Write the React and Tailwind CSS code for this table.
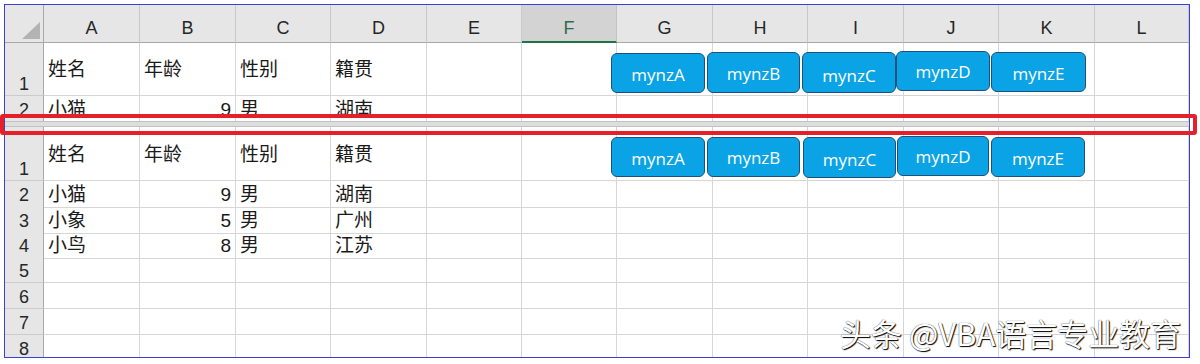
import React from "react";

const GRID =
  "grid grid-cols-[39px_96px_96px_95px_96px_95px_95px_96px_95px_96px_95px_96px_1fr]";
const COLS = ["A", "B", "C", "D", "E", "F", "G", "H", "I", "J", "K", "L"];

const topRows = [
  { h: "h-[53px]", label: "1", tall: true, cells: ["姓名", "年龄", "性别", "籍贯"] },
  { h: "h-[25px]", label: "2", cells: ["小猫", "9", "男", "湖南"], noBottom: true },
];

const bottomRows = [
  { h: "h-[54px]", label: "1", tall: true, cells: ["姓名", "年龄", "性别", "籍贯"] },
  { h: "h-[26px]", label: "2", cells: ["小猫", "9", "男", "湖南"] },
  { h: "h-[25px]", label: "3", cells: ["小象", "5", "男", "广州"] },
  { h: "h-[26px]", label: "4", cells: ["小鸟", "8", "男", "江苏"] },
  { h: "h-[25px]", label: "5", cells: [] },
  { h: "h-[26px]", label: "6", cells: [] },
  { h: "h-[26px]", label: "7", cells: [] },
  { h: "h-[26px]", label: "8", cells: [] },
];

const topButtons = [
  { n: "mynzA", x: 611, y: 53, w: 94, h: 40, t: 0 },
  { n: "mynzB", x: 707, y: 52, w: 93, h: 41, t: -1 },
  { n: "mynzC", x: 802, y: 52, w: 94, h: 41, t: 1 },
  { n: "mynzD", x: 896, y: 51, w: 94, h: 40, t: -1 },
  { n: "mynzE", x: 991, y: 52, w: 95, h: 40, t: 0 },
];
const bottomButtons = [
  { n: "mynzA", x: 611, y: 137, w: 94, h: 40, t: 0 },
  { n: "mynzB", x: 707, y: 137, w: 93, h: 40, t: -1 },
  { n: "mynzC", x: 803, y: 137, w: 93, h: 41, t: 0 },
  { n: "mynzD", x: 897, y: 136, w: 92, h: 40, t: -1 },
  { n: "mynzE", x: 991, y: 137, w: 94, h: 40, t: 0 },
];

function HeaderRow() {
  return (
    <div className={`${GRID} h-[38px] shrink-0`}>
      <div className="bg-[#e6e6e6] border-r border-b border-[#a8a8a8] flex items-end justify-end pr-[3px] pb-[3px]">
        <svg width="18" height="17" viewBox="0 0 18 17">
          <polygon points="18,0 18,17 0,17" fill="#b3b3b3" />
        </svg>
      </div>
      {COLS.map((c) =>
        c === "F" ? (
          <div
            key={c}
            className="bg-[#d3d3d3] border-r border-[#c4c4c4] border-b-2 border-b-[#217346] flex items-end justify-center pb-[2px] text-[18px] leading-[22px] text-[#2e6b47]"
          >
            {c}
          </div>
        ) : (
          <div
            key={c}
            className="bg-[#e6e6e6] border-r border-[#c9c9c9] border-b border-b-[#a8a8a8] flex items-end justify-center pb-[3px] text-[18px] leading-[22px] text-[#262626]"
          >
            {c}
          </div>
        )
      )}
    </div>
  );
}

function Row({ row }) {
  return (
    <div className={`${GRID} ${row.h} shrink-0`}>
      <div
        className={`bg-[#e6e6e6] border-r border-[#a8a8a8] ${
          row.noBottom ? "" : "border-b border-b-[#cccccc]"
        } flex justify-center ${row.tall ? "items-end pb-[1px]" : "items-center pt-[2px]"} text-[18px] leading-[20px] text-[#262626]`}
      >
        {row.label}
      </div>
      {COLS.map((c, i) => {
        const v = row.cells[i];
        const isNum = i === 1 && v && /^\d+$/.test(v);
        return (
          <div
            key={c}
            className={`border-r border-[#d6d6d6] ${
              row.noBottom ? "" : "border-b border-b-[#d6d6d6]"
            } flex items-center pt-[2px] ${isNum ? "justify-end pr-[4px]" : "pl-[4px]"} text-[19px] leading-[24px] text-[#1a1a1a] whitespace-nowrap overflow-visible`}
          >
            {v || ""}
          </div>
        );
      })}
    </div>
  );
}

function Btn({ b }) {
  return (
    <div
      className="absolute bg-[#0aa3e6] border-[1.5px] border-[#1f4f7e] rounded-[6px] flex items-center justify-center text-white text-[17px] leading-[20px] font-['Open_Sans',sans-serif]"
      style={{ left: b.x, top: b.y, width: b.w, height: b.h, paddingTop: 4 + b.t * 2 }}
    >
      {b.n}
    </div>
  );
}

export default function App() {
  return (
    <div className="relative w-[1200px] h-[364px] bg-white overflow-hidden font-['Liberation_Sans','Noto_Sans_CJK_SC',sans-serif]">
      <div className="ml-[4px] mt-[4px] w-[1186px] h-[354px] border border-[#3d3dd8] overflow-hidden flex flex-col">
        <HeaderRow />
        {topRows.map((r, i) => (
          <Row key={"t" + i} row={r} />
        ))}
        <div className="h-[6px] shrink-0 bg-[#dedede] border-t border-b border-[#c2c2c2]" />
        {bottomRows.map((r, i) => (
          <Row key={"b" + i} row={r} />
        ))}
      </div>

      {topButtons.map((b) => (
        <Btn key={"tb" + b.n} b={b} />
      ))}
      {bottomButtons.map((b) => (
        <Btn key={"bb" + b.n} b={b} />
      ))}

      <div className="absolute left-0 top-[114px] w-[1197px] h-[21px] border-4 border-[#e4202a] rounded-[3px]" />

      <div className="absolute left-[840px] top-[314px] text-[31px] leading-[38px] text-white whitespace-nowrap font-['Noto_Sans_CJK_SC',sans-serif] [text-shadow:1px_1px_1px_#000,0_0_1px_#222]">
        头条 @VBA语言专业教育
      </div>
    </div>
  );
}
